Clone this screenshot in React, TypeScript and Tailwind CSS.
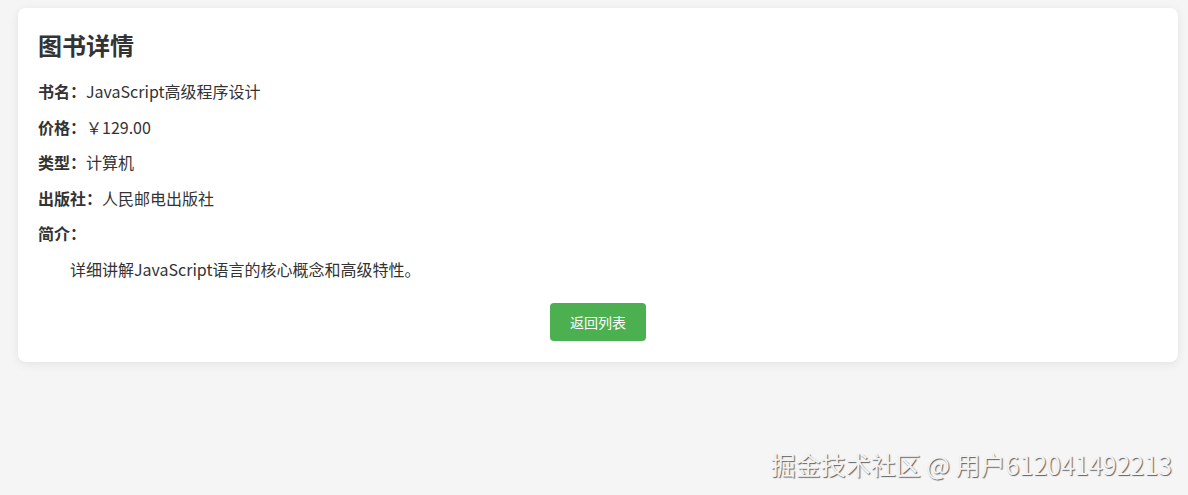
export default function App() {
  const rows = [
    { label: '书名：', value: 'JavaScript高级程序设计' },
    { label: '价格：', value: '￥129.00' },
    { label: '类型：', value: '计算机' },
    { label: '出版社：', value: '人民邮电出版社' },
  ];

  return (
    <div
      className="relative min-h-[495px] bg-[#f5f5f5] pt-2 pl-[18px] pr-[10px] text-[#333]"
      style={{ fontFamily: '"Microsoft YaHei", "Noto Sans CJK SC", sans-serif' }}
    >
      <div className="rounded-lg bg-white px-5 pt-5 pb-[21px] shadow-[0_2px_10px_rgba(0,0,0,0.08)]">
        <h2 className="mb-[18px] text-2xl leading-[33px] font-bold">图书详情</h2>

        <div className="flex flex-col gap-[10px] text-base leading-[25.6px]">
          {rows.map((r) => (
            <p key={r.label}>
              <strong className="font-bold">{r.label}</strong>
              {r.value}
            </p>
          ))}
          <p>
            <strong className="font-bold">简介：</strong>
          </p>
          <p className="indent-8">详细讲解JavaScript语言的核心概念和高级特性。</p>
        </div>

        <div className="mt-5 flex justify-center">
          <button className="h-[38px] w-[96px] rounded bg-[#4caf50] text-sm text-white">
            返回列表
          </button>
        </div>
      </div>

      {/* platform watermark */}
      <div className="absolute right-4 bottom-[15px] text-[25px] leading-8 text-[#f3f3f3] [text-shadow:1px_1px_1px_rgba(0,0,0,0.6)]">
        掘金技术社区 @ 用户612041492213
      </div>
    </div>
  );
}
